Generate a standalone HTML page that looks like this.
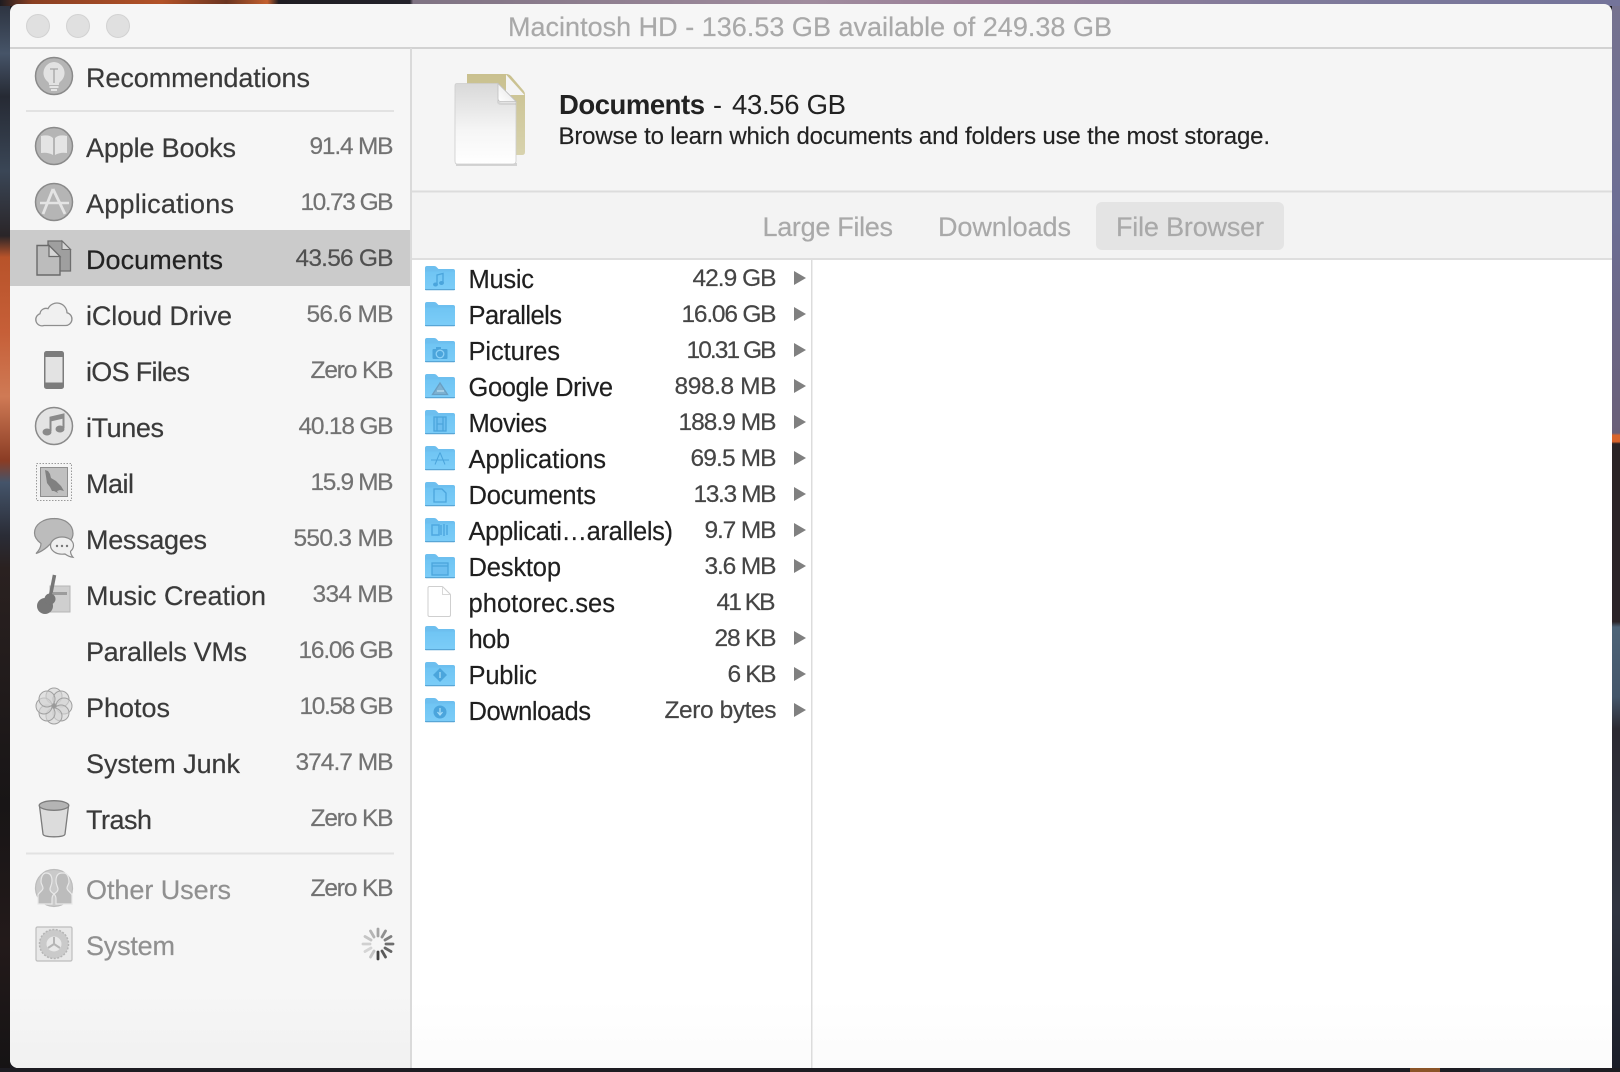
<!DOCTYPE html>
<html><head><meta charset="utf-8"><title>Macintosh HD</title>
<style>
html,body{margin:0;padding:0;width:1620px;height:1072px;overflow:hidden;background:#1a1a20}
svg{display:block}
text{font-family:"Liberation Sans",sans-serif;stroke-linejoin:round}
.l{font-size:27px;fill:#3a3a3a;stroke:#3a3a3a;stroke-width:.2px}
.v{font-size:24.500px;fill:#727272;text-anchor:end;stroke:#727272;stroke-width:.2px}
.n{font-size:25.500px;fill:#1f1f1f;stroke:#1f1f1f;stroke-width:.2px}
.s{font-size:24.500px;fill:#454545;text-anchor:end;stroke:#454545;stroke-width:.2px}
.t{font-size:27px;fill:#a9a9a9;stroke:#a9a9a9;stroke-width:.2px}
</style></head><body>
<svg width="1620" height="1072" viewBox="0 0 1620 1072" xmlns="http://www.w3.org/2000/svg">
<defs>
<linearGradient id="lb" x1="0" y1="0" x2="0" y2="1072" gradientUnits="userSpaceOnUse">
<stop offset="0" stop-color="#2a303c"/><stop offset=".05" stop-color="#465468"/><stop offset=".09" stop-color="#262a34"/><stop offset=".16" stop-color="#3a4656"/><stop offset=".22" stop-color="#2a2528"/><stop offset=".24" stop-color="#b8532a"/><stop offset=".31" stop-color="#c65f38"/><stop offset=".37" stop-color="#cf7a55"/><stop offset=".43" stop-color="#8a3c24"/><stop offset=".45" stop-color="#44546a"/><stop offset=".5" stop-color="#2a2c36"/><stop offset=".53" stop-color="#2a2120"/><stop offset=".75" stop-color="#181516"/><stop offset=".88" stop-color="#231a1a"/><stop offset="1" stop-color="#151314"/>
</linearGradient>
<linearGradient id="rb" x1="0" y1="0" x2="0" y2="1072" gradientUnits="userSpaceOnUse">
<stop offset="0" stop-color="#76728f"/><stop offset=".2" stop-color="#6c6e94"/><stop offset=".404" stop-color="#6a5f78"/><stop offset=".406" stop-color="#d8642c"/><stop offset=".412" stop-color="#d8642c"/><stop offset=".414" stop-color="#2a2426"/><stop offset=".58" stop-color="#2a2428"/><stop offset=".585" stop-color="#4d6478"/><stop offset=".65" stop-color="#44566a"/><stop offset=".68" stop-color="#2b2a32"/><stop offset=".85" stop-color="#2f3440"/><stop offset="1" stop-color="#1a1d28"/>
</linearGradient>
<linearGradient id="tb" x1="0" y1="0" x2="1620" y2="0" gradientUnits="userSpaceOnUse">
<stop offset="0" stop-color="#1e1c20"/><stop offset=".02" stop-color="#8a3f22"/><stop offset=".1" stop-color="#b25228"/><stop offset=".14" stop-color="#6a3420"/><stop offset=".165" stop-color="#c4602e"/><stop offset=".172" stop-color="#1f1d22"/><stop offset=".253" stop-color="#23222a"/><stop offset=".255" stop-color="#7f7383"/><stop offset=".5" stop-color="#a08c9e"/><stop offset=".6" stop-color="#9a7f98"/><stop offset=".8" stop-color="#7f7a9a"/><stop offset="1" stop-color="#74749a"/>
</linearGradient>
<linearGradient id="wf" x1="0" y1="990" x2="0" y2="1068" gradientUnits="userSpaceOnUse"><stop offset="0" stop-color="#f6f6f6"/><stop offset="1" stop-color="#f1f1f1"/></linearGradient>
<linearGradient id="cf" x1="0" y1="1000" x2="0" y2="1068" gradientUnits="userSpaceOnUse"><stop offset="0" stop-color="#fff"/><stop offset="1" stop-color="#fbfbfb"/></linearGradient>
<linearGradient id="pg" x1="0" y1="83" x2="0" y2="164" gradientUnits="userSpaceOnUse"><stop offset="0" stop-color="#d8d8d8"/><stop offset=".6" stop-color="#f6f6f6"/><stop offset="1" stop-color="#fff"/></linearGradient>
<linearGradient id="tan" x1="0" y1="74" x2="0" y2="156" gradientUnits="userSpaceOnUse"><stop offset="0" stop-color="#c9c08e"/><stop offset="1" stop-color="#d8d3ae"/></linearGradient>
<linearGradient id="fold" x1="498" y1="101" x2="516" y2="84" gradientUnits="userSpaceOnUse"><stop offset="0" stop-color="#ffffff"/><stop offset="1" stop-color="#e2e2e2"/></linearGradient>
<linearGradient id="fd" x1="0" y1="0" x2="0" y2="24" gradientUnits="userSpaceOnUse"><stop offset="0" stop-color="#6cc2f2"/><stop offset="1" stop-color="#7ccdf8"/></linearGradient>
<g id="f">
<path d="M0 2a2 2 0 0 1 2-2h7q2 0 3 1.500l1.500 1.500H28a2 2 0 0 1 2 2v18a1 1 0 0 1-1 1H1a1 1 0 0 1-1-1z" fill="#6dbfef"/>
<path d="M0 6.500a1 1 0 0 1 1-1h28a1 1 0 0 1 1 1V23a1 1 0 0 1-1 1H1a1 1 0 0 1-1-1z" fill="url(#fd)"/>
<path d="M0 23h30v.4a.8.8 0 0 1-.8.8H.8a.8.8 0 0 1-.8-.8z" fill="#58a6d6"/>
</g>
<path id="tri" d="M0-7L12 0L0 7z" fill="#808080"/>
</defs>

<!-- desktop -->
<rect width="1620" height="1072" fill="#1b1a20"/>
<rect width="10" height="1072" fill="url(#lb)"/>
<rect x="1612" width="8" height="1072" fill="url(#rb)"/>
<rect width="1620" height="6" fill="url(#tb)"/>
<rect y="1068" width="1620" height="4" fill="#1d1c22"/>
<rect x="1410" y="1068" width="30" height="4" fill="#8a5428"/><rect x="1480" y="1068" width="90" height="4" fill="#2d3644"/>

<!-- window -->
<path d="M18 4H1604a8 8 0 0 1 8 8V1068H18a8 8 0 0 1-8-8V12a8 8 0 0 1 8-8z" fill="#f6f6f6"/>
<path d="M10 990H411V1068H18a8 8 0 0 1-8-8z" fill="url(#wf)"/>
<rect x="411" y="48" width="1201" height="144" fill="#f5f5f5"/>
<rect x="411" y="192" width="1201" height="67" fill="#f3f3f3"/>
<rect x="412" y="260" width="1200" height="808" fill="url(#cf)"/>
<rect x="10" y="47" width="1602" height="2" fill="#d2d2d2"/>
<rect x="410" y="48" width="2" height="1020" fill="#dadada"/>
<rect x="412" y="190.500" width="1200" height="2" fill="#dcdcdc"/>
<rect x="412" y="258" width="1200" height="2" fill="#dedede"/>
<rect x="811" y="260" width="1.500" height="808" fill="#dcdcdc"/>

<!-- traffic lights -->
<g fill="#e0e0e0" stroke="#d2d2d2"><circle cx="38" cy="26" r="11.500"/><circle cx="78" cy="26" r="11.500"/><circle cx="118" cy="26" r="11.500"/></g>
<text x="508" y="36" class="t" textLength="604">Macintosh HD - 136.53 GB available of 249.38 GB</text>

<!-- sidebar -->
<rect x="26" y="110" width="368" height="2" fill="#e2e2e2"/>
<rect x="26" y="852.500" width="368" height="2" fill="#e2e2e2"/>
<rect x="10" y="230" width="400" height="56" fill="#cbcbcb"/>

<text x="86" y="87" class="l" textLength="224">Recommendations</text>
<text x="86" y="157" class="l" textLength="150">Apple Books</text>
<text x="86" y="213" class="l" textLength="148">Applications</text>
<text x="86" y="269" class="l" textLength="137" style="fill:#222;stroke:#222">Documents</text>
<text x="86" y="325" class="l" textLength="146">iCloud Drive</text>
<text x="86" y="381" class="l" textLength="104">iOS Files</text>
<text x="86" y="437" class="l" textLength="78">iTunes</text>
<text x="86" y="493" class="l" textLength="48">Mail</text>
<text x="86" y="549" class="l" textLength="121">Messages</text>
<text x="86" y="605" class="l" textLength="180">Music Creation</text>
<text x="86" y="661" class="l" textLength="161">Parallels VMs</text>
<text x="86" y="717" class="l" textLength="84">Photos</text>
<text x="86" y="773" class="l" textLength="154">System Junk</text>
<text x="86" y="829" class="l" textLength="66">Trash</text>
<text x="86" y="899" class="l" textLength="145" style="fill:#909090;stroke:#909090">Other Users</text>
<text x="86" y="955" class="l" textLength="89" style="fill:#909090;stroke:#909090">System</text>

<text x="393.500" y="154" class="v" textLength="84">91.4 MB</text>
<text x="393.500" y="210" class="v" textLength="93">10.73 GB</text>
<text x="393.500" y="266" class="v" textLength="98" style="fill:#505050;stroke:#505050">43.56 GB</text>
<text x="393.500" y="322" class="v" textLength="87">56.6 MB</text>
<text x="393.500" y="378" class="v" textLength="83">Zero KB</text>
<text x="393.500" y="434" class="v" textLength="95">40.18 GB</text>
<text x="393.500" y="490" class="v" textLength="83">15.9 MB</text>
<text x="393.500" y="546" class="v" textLength="100">550.3 MB</text>
<text x="393.500" y="602" class="v" textLength="81">334 MB</text>
<text x="393.500" y="658" class="v" textLength="95">16.06 GB</text>
<text x="393.500" y="714" class="v" textLength="94">10.58 GB</text>
<text x="393.500" y="770" class="v" textLength="98">374.7 MB</text>
<text x="393.500" y="826" class="v" textLength="83">Zero KB</text>
<text x="393.500" y="896" class="v" textLength="83">Zero KB</text>

<!-- sidebar icons -->
<g>
<circle cx="54" cy="76" r="18.500" fill="#b5b5b5" stroke="#8a8a8a" stroke-width="1.500"/>
<path d="M54 62a11 11 0 0 1 6.500 19.500c-1.500 1.200-1.500 2-1.500 3.500h-10c0-1.500 0-2.300-1.500-3.500A11 11 0 0 1 54 62z" fill="#e2e2e2"/>
<path d="M50 69h8M54 69v14" stroke="#a5a5a5" stroke-width="1.300" fill="none"/>
<path d="M49.500 87h9M51 90h6" stroke="#e4e4e4" stroke-width="2"/>

<circle cx="54" cy="146" r="18.500" fill="#b5b5b5" stroke="#8a8a8a" stroke-width="1.500"/>
<path d="M41 136q8-2 12 2v17q-5-3-12-2zM67 136q-8-2-12 2v17q5-3 12-2z" fill="#e4e4e4"/>

<circle cx="54" cy="202" r="18.500" fill="#b5b5b5" stroke="#8a8a8a" stroke-width="1.500"/>
<path d="M53 189L43 214M53 189L65 214" stroke="#e4e4e4" stroke-width="2.800" fill="none"/>
<path d="M40 203h29" stroke="#e4e4e4" stroke-width="2.500"/>

<path d="M48 241h14l8.500 8.500V271H48z" fill="#9f9f9f" stroke="#6e6e6e" stroke-width="1.300"/>
<path d="M62 241v8.500h8.500z" fill="#d5d5d5" stroke="#6e6e6e" stroke-width="1"/>
<path d="M37 245.500h12l11 11V275H37z" fill="#bcbcbc" stroke="#6a6a6a" stroke-width="1.400"/>
<path d="M49 245.500v11h11z" fill="#d6d6d6" stroke="#6a6a6a" stroke-width="1.200"/>

<path d="M44 325.500h21a6.500 6.500 0 0 0 2-12.800a10 10 0 0 0-19-4a6 6 0 0 0-8 5a6.200 6.200 0 0 0 4 11.800z" fill="#f0f0f0" stroke="#8e8e8e" stroke-width="1.300"/>

<rect x="44" y="351" width="20" height="38" rx="2.500" fill="#7c7c7c"/>
<rect x="45.500" y="357" width="17" height="25.500" fill="#e3e3e3"/>

<circle cx="54" cy="426" r="18.500" fill="#e3e3e3" stroke="#8a8a8a" stroke-width="1.500"/>
<path d="M50.500 431V417.500l13-3V428" stroke="#8a8a8a" stroke-width="2" fill="none"/>
<path d="M50.500 417.500l13-3v4l-13 3z" fill="#8a8a8a"/>
<ellipse cx="47" cy="432" rx="4.500" ry="3.500" fill="#8a8a8a"/><ellipse cx="60" cy="429" rx="4.500" ry="3.500" fill="#8a8a8a"/>

<rect x="36.500" y="463.500" width="35" height="37" fill="#f4f4f4" stroke="#9a9a9a" stroke-width="1" stroke-dasharray="1.500 1.500"/>
<rect x="40.500" y="467.500" width="27" height="29" fill="#c0c0c0" stroke="#8e8e8e" stroke-width="1"/>
<path d="M45 470l3 1 2 3 1 4 5 3 5 5 3 5-4-1-3 1 1 2-4-2-2 0-2-4-3-4z" fill="#808080"/>

<path d="M54 518.500c11 0 19 6 19 15 0 3-1 5-2.500 7H53c-2 3-8 10-17 13 3-3 5-6 5-10-4-3-6.500-6.500-6.500-10.500 0-8.500 8.500-14.500 20-14.500z" fill="#bcbcbc" stroke="#8c8c8c" stroke-width="1.200"/>
<path d="M62 537c6.500 0 11.500 3.700 11.500 8.500 0 2.500-1.200 4.300-3 5.800 0 2 .8 4 2.500 6-3.500-.5-6-1.800-8-3.300-.8.100-1.600.2-3 .2-6.500 0-11.500-4-11.500-8.700S55.500 537 62 537z" fill="#efefef" stroke="#8c8c8c" stroke-width="1.200"/>
<circle cx="57" cy="546" r="1.200" fill="#777"/><circle cx="62" cy="546" r="1.200" fill="#777"/><circle cx="67" cy="546" r="1.200" fill="#777"/>

<rect x="50" y="586" width="20" height="26" fill="#cfcfcf" stroke="#b5b5b5"/>
<rect x="53" y="592" width="14" height="3" fill="#9c9c9c"/>
<path d="M54.500 575L50 598" stroke="#777" stroke-width="3.500"/>
<circle cx="45" cy="606" r="8" fill="#777"/><circle cx="50" cy="599" r="5.500" fill="#777"/>

<g fill="#d4d4d4" fill-opacity=".6" stroke="#a0a0a0" stroke-width="1">
<circle cx="54" cy="696" r="8"/><circle cx="61" cy="699" r="8"/><circle cx="64" cy="706" r="8"/><circle cx="61" cy="713" r="8"/><circle cx="54" cy="716" r="8"/><circle cx="47" cy="713" r="8"/><circle cx="44" cy="706" r="8"/><circle cx="47" cy="699" r="8"/>
</g>
<circle cx="54" cy="706" r="2" fill="#999"/>

<path d="M39.500 806L43 834c.3 2 5 2.800 11 2.800s10.700-.8 11-2.800l3.500-28z" fill="#dcdcdc" stroke="#7c7c7c" stroke-width="1.300"/>
<ellipse cx="54" cy="805.500" rx="14.800" ry="4.800" fill="#b4b4b4" stroke="#7c7c7c" stroke-width="1.300"/>

<circle cx="54" cy="888" r="18.500" fill="#cacaca" stroke="#bcbcbc" stroke-width="1.200"/>
<path d="M46 873c5 0 6 4 6 8 0 4-2 6-2 8 0 3 3 4 4 5-1 1-2 3-2 5v5H38v-9c1-3 5-4 5-7 0-2-2-4-2-6 0-5 2-9 5-9z" fill="#bcbcbc" stroke="#e8e8e8" stroke-width="1.200"/>
<path d="M62 873c-5 0-6 4-6 8 0 4 2 6 2 8 0 3-3 4-4 5 1 1 2 3 2 5v5h16v-9c-1-3-5-4-5-7 0-2 2-4 2-6 0-5-2-9-5-9z" fill="#bcbcbc" stroke="#e8e8e8" stroke-width="1.200"/>

<rect x="36" y="927" width="36" height="34" rx="1.500" fill="#e8e8e8" stroke="#bdbdbd" stroke-width="1.200"/>
<circle cx="54" cy="944" r="14.500" fill="#cacaca" stroke="#b5b5b5" stroke-width="1.500" stroke-dasharray="2 1.500"/>
<circle cx="54" cy="944" r="7.500" fill="#e8e8e8"/>
<path d="M54 944v-7M54 944l6 4M54 944l-6 4" stroke="#b5b5b5" stroke-width="2"/>
</g>

<!-- spinner -->
<g stroke-width="2.800" stroke-linecap="round">
<path d="M378 952v7" stroke="#444"/>
<path d="M382 951l3.500 6" stroke="#5a5a5a" />
<path d="M385 948l6 3.500" stroke="#666"/>
<path d="M386 944h7" stroke="#6e6e6e"/>
<path d="M385 940l6-3.500" stroke="#808080"/>
<path d="M382 937l3.500-6" stroke="#909090"/>
<path d="M378 936v-7" stroke="#a5a5a5"/>
<path d="M374 937l-3.500-6" stroke="#b5b5b5"/>
<path d="M371 940l-6-3.500" stroke="#c5c5c5"/>
<path d="M370 944h-7" stroke="#d0d0d0"/>
<path d="M371 948l-6 3.500" stroke="#d5d5d5"/>
<path d="M374 951l-3.500 6" stroke="#c5c5c5"/>
</g>

<!-- header -->
<path d="M467 74h39q3 0 5 2l12 14q2 2 2 5v57q0 3-3 3h-55z" fill="url(#tan)"/>
<path d="M506 74.500l18.500 20.500h-16q-2.500 0-2.500-2.500z" fill="#f4f4f4"/>
<rect x="456" y="163" width="61" height="3" fill="#bdbdbd" opacity=".6"/>
<path d="M457 83.500h41l18 18V161q0 3-3 3h-56q-2 0-2-3V85.500q0-2 2-2z" fill="url(#pg)" stroke="#cdcdcd" stroke-width=".8"/>
<path d="M498 83.500l18 18h-15q-3 0-3-3z" fill="url(#fold)" stroke="#c0c0c0" stroke-width=".8"/>
<path d="M498 99q0 4 4 4h14v2h-15q-4 0-4-4z" fill="#000" opacity=".07"/>

<text x="559" y="114" style="font-size:27.500px;font-weight:bold;fill:#222" textLength="146">Documents</text>
<text x="713" y="114" style="font-size:27px;fill:#222">-</text>
<text x="732" y="114" style="font-size:27.500px;fill:#222" textLength="114">43.56 GB</text>
<text x="558.500" y="144" style="font-size:24px;fill:#222;stroke:#222;stroke-width:.15px" textLength="711.500">Browse to learn which documents and folders use the most storage.</text>

<!-- tabs -->
<rect x="1096" y="202" width="188" height="48" rx="6" fill="#e4e4e4"/>
<text x="762.500" y="236" class="t" textLength="130.500">Large Files</text>
<text x="938" y="236" class="t" textLength="133">Downloads</text>
<text x="1116" y="236" class="t" textLength="148">File Browser</text>

<!-- files: folder icons -->
<use href="#f" x="425" y="266"/><use href="#f" x="425" y="302"/><use href="#f" x="425" y="338"/><use href="#f" x="425" y="374"/><use href="#f" x="425" y="410"/><use href="#f" x="425" y="446"/><use href="#f" x="425" y="482"/><use href="#f" x="425" y="518"/><use href="#f" x="425" y="554"/><use href="#f" x="425" y="626"/><use href="#f" x="425" y="662"/><use href="#f" x="425" y="698"/>
<path d="M429.500 586.500h13l8 8V615q0 1.500-1.500 1.500h-19.500q-1.500 0-1.500-1.500v-27q0-1.500 1.500-1.500z" fill="#fff" stroke="#cfcfcf"/>
<path d="M442.500 586.500v8h8" fill="none" stroke="#d8d8d8"/>

<!-- folder glyphs -->
<g fill="none" stroke="#4ba5dc" stroke-width="1.300">
<path d="M437 284.500V275l6-1.500V283"/><ellipse cx="435.500" cy="284.500" rx="1.800" ry="1.300" fill="#4ba5dc"/><ellipse cx="441.500" cy="283" rx="1.800" ry="1.300" fill="#4ba5dc"/>
<rect x="432.500" y="349" width="15" height="10" rx="1" fill="#4ba5dc" stroke="none"/><circle cx="440" cy="354" r="3.800" stroke="#8cd0f6"/><rect x="436" y="347" width="5" height="2.500" fill="#4ba5dc" stroke="none"/>
<path d="M440 383l7.500 11.500h-15z" fill="#7eb2d2" stroke="#6a9fc2"/><path d="M437 391h7" stroke="#c0e0f2"/>
<rect x="434" y="417" width="12" height="14" fill="#6cbef0"/><path d="M437 417v14M443 417v14M437 424h6"/>
<path d="M440 452.500l-5 12M440 452.500l5 12M431 460h18" stroke-width="1"/>
<path d="M434 489h8l4 4v9h-12z"/>
<path d="M432 525h7v10h-7zM441 525v10M444 524v12M447 525v10" stroke="#4ea8e0" stroke-width="1.500"/>
<rect x="432" y="563" width="16" height="12" fill="#6cbef0"/><path d="M432 566h16" />
<path d="M440 668l7 7-7 7-7-7z" fill="#4ba5dc" stroke="none"/><path d="M440 672v6" stroke="#a5dcf8"/>
<circle cx="440" cy="712" r="6.500" fill="#4ba5dc" stroke="none"/><path d="M440 708v6M437.500 712l2.500 3 2.500-3" stroke="#a5dcf8"/>
</g>

<!-- names -->
<text x="468.500" y="288" class="n" textLength="65.500">Music</text>
<text x="468.500" y="324" class="n" textLength="93.500">Parallels</text>
<text x="468.500" y="360" class="n" textLength="91.500">Pictures</text>
<text x="468.500" y="396" class="n" textLength="144.500">Google Drive</text>
<text x="468.500" y="432" class="n" textLength="78.500">Movies</text>
<text x="468.500" y="468" class="n" textLength="137.500">Applications</text>
<text x="468.500" y="504" class="n" textLength="127.500">Documents</text>
<text x="468.500" y="540" class="n" textLength="204.500">Applicati…arallels)</text>
<text x="468.500" y="576" class="n" textLength="92.500">Desktop</text>
<text x="468.500" y="612" class="n" textLength="146.500">photorec.ses</text>
<text x="468.500" y="648" class="n" textLength="41.500">hob</text>
<text x="468.500" y="684" class="n" textLength="68.500">Public</text>
<text x="468.500" y="720" class="n" textLength="122.500">Downloads</text>

<!-- sizes -->
<text x="776.500" y="286" class="s" textLength="84">42.9 GB</text>
<text x="776.500" y="322" class="s" textLength="95">16.06 GB</text>
<text x="776.500" y="358" class="s" textLength="90">10.31 GB</text>
<text x="776.500" y="394" class="s" textLength="102">898.8 MB</text>
<text x="776.500" y="430" class="s" textLength="98">188.9 MB</text>
<text x="776.500" y="466" class="s" textLength="86">69.5 MB</text>
<text x="776.500" y="502" class="s" textLength="83">13.3 MB</text>
<text x="776.500" y="538" class="s" textLength="72">9.7 MB</text>
<text x="776.500" y="574" class="s" textLength="72">3.6 MB</text>
<text x="775.500" y="610" class="s" textLength="59">41 KB</text>
<text x="776.500" y="646" class="s" textLength="62">28 KB</text>
<text x="776.500" y="682" class="s" textLength="49">6 KB</text>
<text x="776.500" y="718" class="s" textLength="112">Zero bytes</text>

<!-- arrows -->
<use href="#tri" x="794" y="278"/><use href="#tri" x="794" y="314"/><use href="#tri" x="794" y="350"/><use href="#tri" x="794" y="386"/><use href="#tri" x="794" y="422"/><use href="#tri" x="794" y="458"/><use href="#tri" x="794" y="494"/><use href="#tri" x="794" y="530"/><use href="#tri" x="794" y="566"/><use href="#tri" x="794" y="638"/><use href="#tri" x="794" y="674"/><use href="#tri" x="794" y="710"/>
</svg>
</body></html>
